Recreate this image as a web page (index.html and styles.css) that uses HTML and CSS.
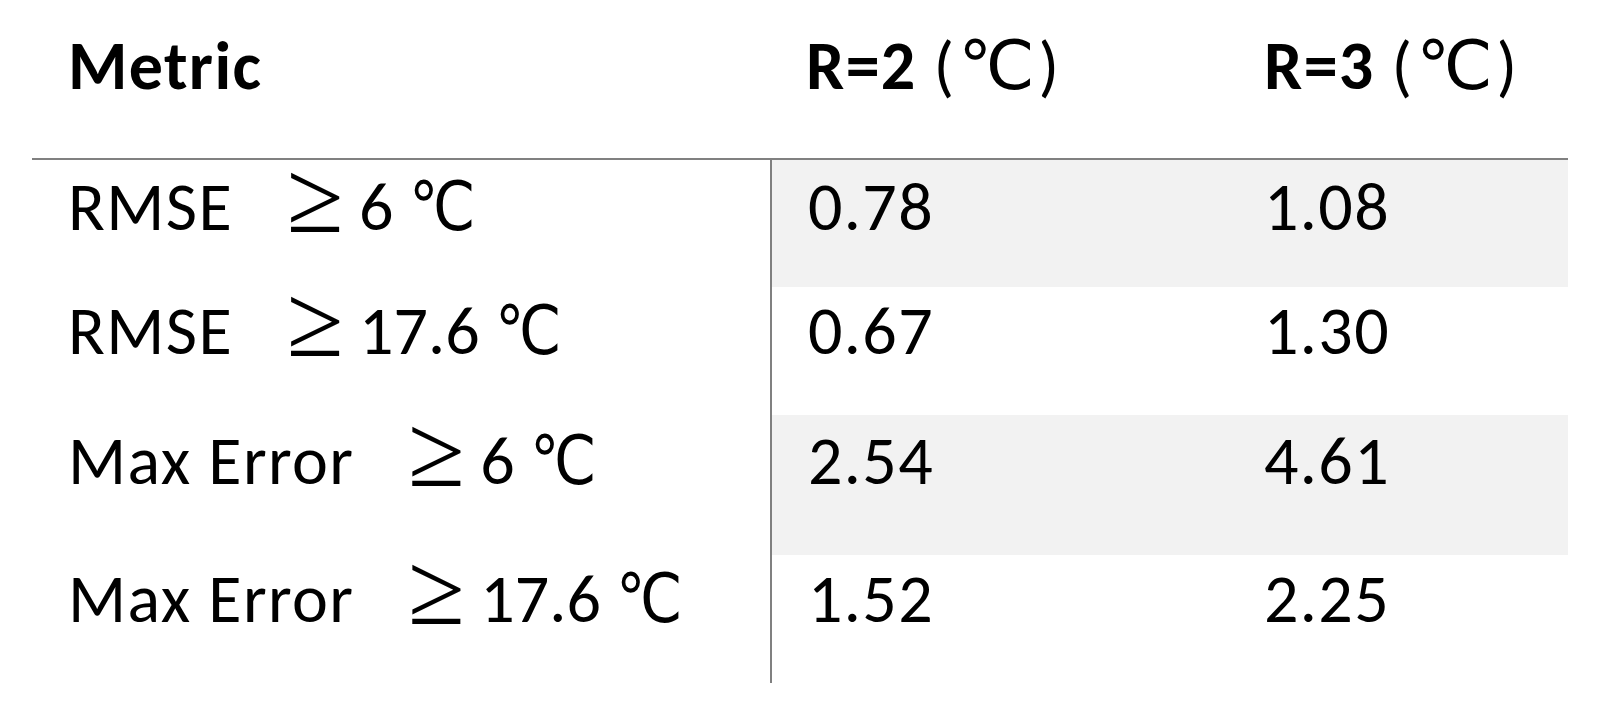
FILE: index.html
```html
<!DOCTYPE html>
<html lang="en">
<head>
  <meta charset="UTF-8" />
  <meta name="viewport" content="width=device-width, initial-scale=1.0" />
  <title>Error metrics</title>
  <link rel="stylesheet" href="styles.css">
</head>
<body>
  <table class="metrics">
    <thead>
      <tr>
        <th class="col-metric">Metric</th>
        <th class="col-r2">R=2 <span class="unit">(℃)</span></th>
        <th class="col-r3">R=3 <span class="unit">(℃)</span></th>
      </tr>
    </thead>
    <tbody>
      <tr class="row-a shade">
        <td>RMSE<span class="cond"><span class="ge">≥</span> 6 <span class="deg">℃</span></span></td>
        <td class="val first">0.78</td>
        <td class="val">1.08</td>
      </tr>
      <tr class="row-b">
        <td>RMSE<span class="cond"><span class="ge">≥</span> 17.6 <span class="deg">℃</span></span></td>
        <td class="val first">0.67</td>
        <td class="val">1.30</td>
      </tr>
      <tr class="row-c shade">
        <td>Max Error<span class="cond"><span class="ge">≥</span> 6 <span class="deg">℃</span></span></td>
        <td class="val first">2.54</td>
        <td class="val">4.61</td>
      </tr>
      <tr class="row-b">
        <td>Max Error<span class="cond"><span class="ge">≥</span> 17.6 <span class="deg">℃</span></span></td>
        <td class="val first">1.52</td>
        <td class="val">2.25</td>
      </tr>
    </tbody>
  </table>
</body>
</html>
```

FILE: styles.css
```css
:root {
  --rule: #808080;
  --shade: #f2f2f2;
}
body {
  margin: 0;
  background: #fff;
  color: #000;
  font-family: Carlito, Calibri, Lato, "DejaVu Sans", sans-serif;
}
.metrics {
  margin-left: 32px;
  width: 1536px;
  border-collapse: separate;
  border-spacing: 0;
  table-layout: fixed;
  font-size: 68px;
  line-height: 1;
  letter-spacing: 0.02em;
}
.col-metric { width: 738px; }
.col-r2 { width: 458px; }
.col-r3 { width: 340px; }
th, td {
  text-align: left;
  vertical-align: top;
  padding: 0 0 0 36px;
  white-space: nowrap;
  box-sizing: border-box;
}
th {
  height: 160px;
  padding-top: 32px;
  font-weight: bold;
  border-bottom: 2px solid var(--rule);
}
th .unit {
  font-weight: normal;
  letter-spacing: 0.06em;
}
.row-a td { height: 127px; padding-top: 13px; }
.row-b td { height: 128px; padding-top: 10px; }
.row-c td { height: 140px; padding-top: 12px; }
td.first { border-left: 2px solid var(--rule); }
.shade td.val { background: var(--shade); }
.cond {
  margin-left: 54px;
  letter-spacing: 0;
}
.ge {
  font-family: "Liberation Serif", serif;
  font-size: 1.52em;
  line-height: 0;
  vertical-align: -2px;
}
.deg {
  display: inline-block;
  transform: scaleX(0.87);
  transform-origin: 0 0;
}
```
